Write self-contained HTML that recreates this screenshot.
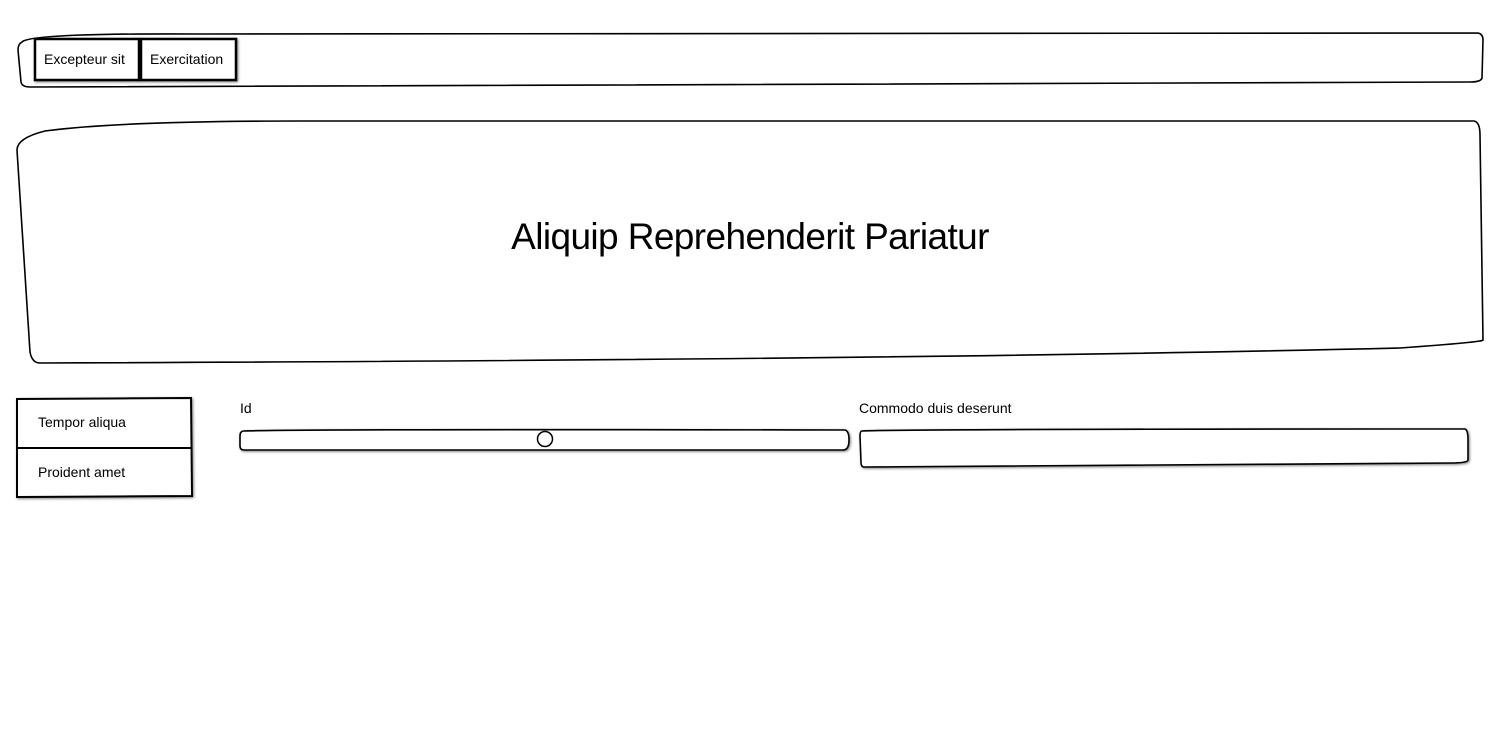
<!DOCTYPE html>
<html><head><meta charset="utf-8"><style>
html,body{margin:0;padding:0;background:#fff;width:1500px;height:752px;overflow:hidden;position:relative;font-family:"Liberation Sans",sans-serif;color:#000}
svg{position:absolute;left:0;top:0}
.t{position:absolute;white-space:nowrap;font-size:14px}
</style></head><body>
<svg width="1500" height="752" viewBox="0 0 1500 752">
<defs><filter id="sh" x="-5%" y="-20%" width="110%" height="140%"><feDropShadow dx="1" dy="1" stdDeviation="1.2" flood-color="#000" flood-opacity="0.5"/></filter></defs>
<g fill="#fff" stroke="#000" stroke-width="1.6">
<path d="M22,42 Q30,33 200,34 L1478,33 Q1483,34 1483,40 L1482,78 Q1481,82 1470,82 Q800,86 30,87 Q22,87 21,82 L18,50 Q18,44 22,42Z"/>
<path d="M17,150 Q17,138 45,131 Q120,121 300,121 L1474,121 Q1480,122 1480,135 L1483,340 Q1484,342 1400,348 Q900,360 40,363 Q32,363 30,352 Z"/>
<rect x="35" y="39" width="104" height="41" stroke-width="2.5" filter="url(#sh)"/>
<rect x="141" y="39" width="95" height="41" stroke-width="2.5" filter="url(#sh)"/>
<path d="M17,399 L191,398 L192,496 L17,497Z" stroke-width="2" filter="url(#sh)"/>
<line x1="17" y1="448" x2="192" y2="448" stroke-width="2"/>
<path d="M244,431 Q300,429 845,430 Q849,431 849,440 Q849,450 843,450 L244,450 Q240,450 240,446 L240,436 Q240,431 244,431Z" filter="url(#sh)"/>
<circle cx="545" cy="439" r="7.5" stroke-width="1.5"/>
<path d="M862,431 Q900,429 1465,429 Q1468,430 1468,440 L1468,460 Q1468,463 1450,463 Q1200,465 864,467 Q861,467 861,462 L860,436 Q860,431 862,431Z" filter="url(#sh)"/>
</g>
</svg>
<div class="t" style="left:44px;top:51px">Excepteur sit</div>
<div class="t" style="left:150px;top:51px">Exercitation</div>
<div class="t" style="left:0;width:1500px;text-align:center;top:216px;font-size:37px;letter-spacing:-0.6px">Aliquip Reprehenderit Pariatur</div>
<div class="t" style="left:38px;top:414px">Tempor aliqua</div>
<div class="t" style="left:38px;top:464px">Proident amet</div>
<div class="t" style="left:240px;top:400px">Id</div>
<div class="t" style="left:859px;top:400px">Commodo duis deserunt</div>
</body></html>
